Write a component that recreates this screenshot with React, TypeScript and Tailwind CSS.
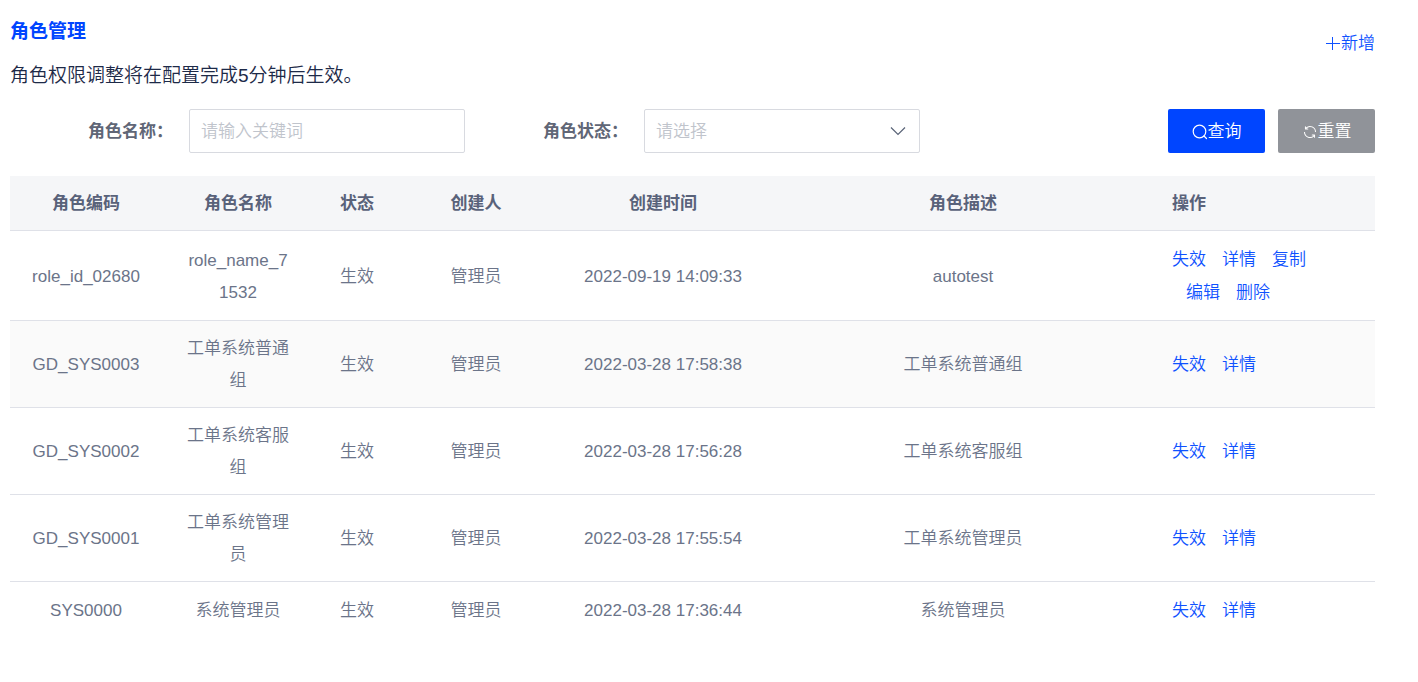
import { useState } from "react";

type Role = {
  code: string;
  name: string;
  time: string;
  desc: string;
  actions: string[][];
};

const BASE_ACTIONS = [["失效", "详情"]];

const ROLES: Role[] = [
  {
    code: "role_id_02680",
    name: "role_name_71532",
    time: "2022-09-19 14:09:33",
    desc: "autotest",
    actions: [
      ["失效", "详情", "复制"],
      ["编辑", "删除"],
    ],
  },
  { code: "GD_SYS0003", name: "工单系统普通组", time: "2022-03-28 17:58:38", desc: "工单系统普通组", actions: BASE_ACTIONS },
  { code: "GD_SYS0002", name: "工单系统客服组", time: "2022-03-28 17:56:28", desc: "工单系统客服组", actions: BASE_ACTIONS },
  { code: "GD_SYS0001", name: "工单系统管理员", time: "2022-03-28 17:55:54", desc: "工单系统管理员", actions: BASE_ACTIONS },
  { code: "SYS0000", name: "系统管理员", time: "2022-03-28 17:36:44", desc: "系统管理员", actions: BASE_ACTIONS },
];

function PlusIcon() {
  return (
    <svg className="size-4" viewBox="0 0 16 16" fill="none" stroke="currentColor" aria-hidden="true">
      <path d="M7.500 1v13M1 7.500h14" />
    </svg>
  );
}

function SearchIcon() {
  return (
    <svg className="size-4" viewBox="0 0 16 16" fill="none" stroke="currentColor" strokeWidth="1.2" aria-hidden="true">
      <circle cx="7.5" cy="7.5" r="6.3" />
      <path d="M12 12l2.500 2.500" strokeLinecap="round" />
    </svg>
  );
}

function RefreshIcon() {
  return (
    <svg className="size-4" viewBox="0 0 1024 1024" fill="currentColor" aria-hidden="true">
      <path d="M771.776 794.88A384 384 0 0 1 128 512h64a320 320 0 0 0 555.712 216.448H654.72a32 32 0 1 1 0-64h149.056a32 32 0 0 1 32 32v148.928a32 32 0 1 1-64 0v-50.56zM276.288 295.616h92.992a32 32 0 0 1 0 64H220.16a32 32 0 0 1-32-32V178.56a32 32 0 0 1 64 0v50.56A384 384 0 0 1 896.128 512h-64a320 320 0 0 0-555.776-216.384z" />
    </svg>
  );
}

function ChevronIcon() {
  return (
    <svg
      className="pointer-events-none absolute top-1/2 right-3 size-5 -translate-y-1/2 text-[#5a6478]"
      viewBox="0 0 20 20"
      fill="none"
      stroke="currentColor"
      strokeWidth="1.2"
      aria-hidden="true"
    >
      <path d="M3 6.500l7 7 7-7" />
    </svg>
  );
}

function Filters() {
  const [name, setName] = useState("");
  const [status, setStatus] = useState("");

  return (
    <form className="mt-[17px] grid grid-cols-3 text-[17px]" onSubmit={(e) => e.preventDefault()}>
      <div className="flex items-center">
        <label htmlFor="role-name" className="w-[179px] pt-0.5 pr-4 text-right font-bold text-[#606676]">
          角色名称：
        </label>
        <input
          id="role-name"
          value={name}
          onChange={(e) => setName(e.target.value)}
          placeholder="请输入关键词"
          className="h-11 min-w-0 flex-1 rounded-xs border border-[#d8dae0] px-[11px] pt-0.5 placeholder:text-[#c0c4cc]"
        />
      </div>
      <div className="flex items-center">
        <label htmlFor="role-status" className="w-[179px] pt-0.5 pr-4 text-right font-bold text-[#606676]">
          角色状态：
        </label>
        <div className="relative min-w-0 flex-1">
          <select
            id="role-status"
            value={status}
            onChange={(e) => setStatus(e.target.value)}
            className="h-11 w-full appearance-none rounded-xs border border-[#d8dae0] bg-white px-[11px] pt-0.5 text-[#c0c4cc]"
          >
            <option value="">请选择</option>
            <option value="1">生效</option>
            <option value="0">失效</option>
          </select>
          <ChevronIcon />
        </div>
      </div>
      <div className="flex justify-end gap-[13px] text-white">
        <button type="submit" className="flex h-11 w-[97px] items-center justify-center rounded-xs bg-[#0045ff] pt-0.5">
          <SearchIcon />
          查询
        </button>
        <button
          type="reset"
          className="flex h-11 w-[97px] items-center justify-center rounded-xs bg-[#909399] pt-0.5"
          onClick={() => {
            setName("");
            setStatus("");
          }}
        >
          <RefreshIcon />
          重置
        </button>
      </div>
    </form>
  );
}

function RoleTable() {
  return (
    <table className="mt-[23px] w-full table-fixed text-center text-[17px] leading-8 text-[#6b7489]">
      <colgroup>
        <col className="w-[152px]" />
        <col className="w-[152px]" />
        <col className="w-[86px]" />
        <col className="w-[152px]" />
        <col className="w-[222px]" />
        <col />
        <col className="w-[223px]" />
      </colgroup>
      <thead className="border-b border-[#dfe1e8] bg-[#f5f6f8] text-[#59627a]">
        <tr>
          <th className="pt-3 pb-2.5">角色编码</th>
          <th className="pt-3 pb-2.5">角色名称</th>
          <th className="pt-3 pb-2.5">状态</th>
          <th className="pt-3 pb-2.5">创建人</th>
          <th className="pt-3 pb-2.5">创建时间</th>
          <th className="pt-3 pb-2.5">角色描述</th>
          <th className="px-5 pt-3 pb-2.5 text-left">操作</th>
        </tr>
      </thead>
      <tbody>
        {ROLES.map((role) => (
          <tr key={role.code} className="border-b border-[#dfe1e8] last:border-b-0 nth-2:bg-[#fafafa]">
            <td className="pt-3 pb-2.5">{role.code}</td>
            <td className="px-6 pt-3 pb-2.5 break-all">{role.name}</td>
            <td className="pt-3 pb-2.5">生效</td>
            <td className="pt-3 pb-2.5">管理员</td>
            <td className="pt-3 pb-2.5">{role.time}</td>
            <td className="pt-3 pb-2.5">{role.desc}</td>
            <td className="px-5 pt-3 pb-[11px] text-[#0f52ff]">
              {role.actions.map((line, i) => (
                <div key={i} className="flex gap-4 leading-[33px] not-first:pl-[14px]">
                  {line.map((action) => (
                    <button key={action} type="button">
                      {action}
                    </button>
                  ))}
                </div>
              ))}
            </td>
          </tr>
        ))}
      </tbody>
    </table>
  );
}

export default function App() {
  return (
    <main className="min-h-screen bg-white pt-4 pr-[43px] pl-[10px] font-['Liberation_Sans','Noto_Sans_CJK_SC',sans-serif] font-[350]">
      <header className="flex items-start justify-between">
        <div className="text-[19px] leading-8">
          <h1 className="font-bold text-[#0045ff]">角色管理</h1>
          <p className="mt-3 text-[#1d2a48]">角色权限调整将在配置完成5分钟后生效。</p>
        </div>
        <a href="#new" className="mt-3 flex items-center text-[17px] leading-8 text-[#0f52ff]">
          <PlusIcon />
          新增
        </a>
      </header>
      <Filters />
      <RoleTable />
    </main>
  );
}
